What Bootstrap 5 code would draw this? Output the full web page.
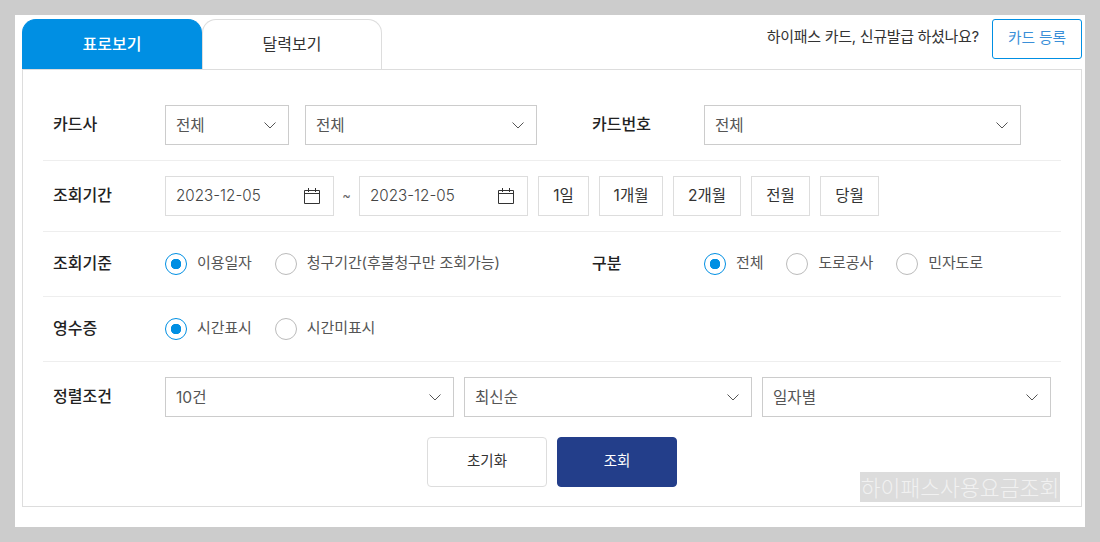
<!DOCTYPE html>
<html lang="ko">
<head>
<meta charset="utf-8">
<title>하이패스 사용요금 조회</title>
<link href="https://cdn.jsdelivr.net/npm/bootstrap@5.3.0/dist/css/bootstrap.min.css" rel="stylesheet">
<style>
html,body{height:100%}
body{background:#ccc;padding:15px 15px;font-family:Inter,"Noto Sans CJK KR",sans-serif;font-size:15px;color:#333;overflow:hidden}
.sheet{background:#fff;width:1070px;height:512px;padding:4px 3px 0 7px;position:relative}
.topbar{height:50px}
.tabset{border:0;width:360px;flex-wrap:nowrap}
.tabset .nav-link{width:180px;height:50px;display:flex;align-items:center;justify-content:center;border:1px solid #ddd;border-bottom:0;border-radius:14px 14px 0 0;color:#333;font-size:16px;background:#fff;margin:0;padding:0 0 2px}
.tabset .nav-link.active{background:#008fe3;border-color:#008fe3;color:#fff;font-weight:500}
.hint{font-size:15px;margin-right:13px;margin-top:-14px;letter-spacing:-.3px}
.btn.regbtn{width:90px;height:40px;border:1px solid #008fe3;border-radius:3px;color:#3a8fd8;background:#fff;font-size:14.7px;padding:0 0 2px;align-self:flex-start}
.panel{border:1px solid #ddd;width:1060px;height:438px;padding:20px 20px 0}
.frow{display:flex;align-items:center;padding:0 10px;border-bottom:1px solid #eee}
.frow.r1{height:71px;padding-top:15px;padding-bottom:15px}
.frow.r2{height:71px}
.frow.r3,.frow.r4{height:65px}
.frow.r5{height:55px;border-bottom:0;padding-top:15px}
.flabel{width:112px;font-weight:500;font-size:16px;color:#222;flex:none;padding-bottom:2px}
.flabel.second{width:112px;margin-left:55px}
.form-select.fsel{height:40px;border:1px solid #ccc;border-radius:0;font-size:15.6px;color:#555;padding:2px 30px 0 10px;font-family:inherit;background-image:url("data:image/svg+xml,%3Csvg xmlns='http://www.w3.org/2000/svg' width='12' height='7' viewBox='0 0 12 7'%3E%3Cpath d='M.5.5 6 6 11.5.5' fill='none' stroke='%23555' stroke-width='1'/%3E%3C/svg%3E");background-size:12px 7px;background-position:right 12px center;flex:none}
.w124{width:124px}.w232{width:232px}.w317{width:317px}.w289{width:289px}.w288{width:288px}
.datebox{width:169px;height:40px;border:1px solid #ddd;display:flex;align-items:center;justify-content:space-between;padding:0 12px 0 10px;color:#444;font-size:15.2px;flex:none;font-weight:300}
.tilde{width:25px;text-align:center;color:#666;font-size:13px;flex:none}
.btn.rangebtn{height:40px;border:1px solid #ddd;border-radius:0;background:#fff;color:#333;font-size:15.5px;padding:0;flex:none}
.w51{width:51px}.w64{width:64px}.w68{width:68px}.w59{width:59px}
.rgap{gap:10px;margin-left:10px}
.radioset{display:flex;align-items:center}
.form-check.rad{display:flex;align-items:center;padding:0;margin:0 23px 0 0;min-height:0}
.form-check.rad .form-check-input{width:22px;height:22px;margin:0 10px 0 0;float:none;border:1px solid #bbb;flex:none}
.form-check.rad .form-check-input:checked{background-color:#fff;border-color:#008fe3;background-image:radial-gradient(circle,#008fe3 0 5px,#fff 5.5px)}
.form-check.rad label{font-size:15px;color:#555;letter-spacing:-.1px;padding-bottom:2px}
.radgrp{width:427px;flex:none}
.actions{display:flex;justify-content:center;gap:10px;margin-top:20px}
.btn.act{width:120px;height:50px;font-size:14.5px;border-radius:4px;padding:0 0 2px;font-weight:400}
.btn.act.ghost{background:#fff;border:1px solid #ddd;color:#333}
.btn.act.prime{background:#233e8a;border:1px solid #233e8a;color:#fff}
.wmark{position:absolute;left:845px;top:457px;width:200px;height:30px;background:#dcdcdc;color:#f1f1f1;font-family:"Noto Sans CJK KR",sans-serif;font-size:21.6px;font-weight:300;line-height:30px;white-space:nowrap;text-align:center}
.cal{display:block}
</style>
</head>
<body>
<div class="sheet">
  <div class="topbar d-flex justify-content-between">
    <ul class="nav tabset">
      <li class="nav-item"><a class="nav-link active" href="#">표로보기</a></li>
      <li class="nav-item"><a class="nav-link" href="#">달력보기</a></li>
    </ul>
    <div class="d-flex align-items-center">
      <span class="hint">하이패스 카드, 신규발급 하셨나요?</span>
      <button type="button" class="btn regbtn">카드 등록</button>
    </div>
  </div>
  <div class="panel">
    <div class="frow r1">
      <div class="flabel">카드사</div>
      <select class="form-select fsel w124 me-3"><option>전체</option></select>
      <select class="form-select fsel w232"><option>전체</option></select>
      <div class="flabel second">카드번호</div>
      <select class="form-select fsel w317"><option>전체</option></select>
    </div>
    <div class="frow r2">
      <div class="flabel">조회기간</div>
      <div class="datebox">2023-12-05
        <svg class="cal" width="18" height="18" viewBox="0 0 18 18" fill="none" stroke="#333" stroke-width="1"><path d="M1.5 3.5h15v13h-15zM1.5 6.5h15M5.5 1v4M12.5 1v4"/></svg>
      </div>
      <div class="tilde">~</div>
      <div class="datebox">2023-12-05
        <svg class="cal" width="18" height="18" viewBox="0 0 18 18" fill="none" stroke="#333" stroke-width="1"><path d="M1.5 3.5h15v13h-15zM1.5 6.5h15M5.5 1v4M12.5 1v4"/></svg>
      </div>
      <div class="d-flex rgap">
        <button type="button" class="btn rangebtn w51">1일</button>
        <button type="button" class="btn rangebtn w64">1개월</button>
        <button type="button" class="btn rangebtn w68">2개월</button>
        <button type="button" class="btn rangebtn w59">전월</button>
        <button type="button" class="btn rangebtn w59">당월</button>
      </div>
    </div>
    <div class="frow r3">
      <div class="flabel">조회기준</div>
      <div class="radioset radgrp">
        <div class="form-check rad"><input class="form-check-input" type="radio" name="a" id="a1" checked><label for="a1">이용일자</label></div>
        <div class="form-check rad"><input class="form-check-input" type="radio" name="a" id="a2"><label for="a2">청구기간(후불청구만 조회가능)</label></div>
      </div>
      <div class="flabel">구분</div>
      <div class="radioset">
        <div class="form-check rad"><input class="form-check-input" type="radio" name="b" id="b1" checked><label for="b1">전체</label></div>
        <div class="form-check rad"><input class="form-check-input" type="radio" name="b" id="b2"><label for="b2">도로공사</label></div>
        <div class="form-check rad"><input class="form-check-input" type="radio" name="b" id="b3"><label for="b3">민자도로</label></div>
      </div>
    </div>
    <div class="frow r4">
      <div class="flabel">영수증</div>
      <div class="radioset">
        <div class="form-check rad"><input class="form-check-input" type="radio" name="c" id="c1" checked><label for="c1">시간표시</label></div>
        <div class="form-check rad"><input class="form-check-input" type="radio" name="c" id="c2"><label for="c2">시간미표시</label></div>
      </div>
    </div>
    <div class="frow r5">
      <div class="flabel">정렬조건</div>
      <div class="d-flex" style="gap:10px">
        <select class="form-select fsel w289"><option>10건</option></select>
        <select class="form-select fsel w288"><option>최신순</option></select>
        <select class="form-select fsel w289"><option>일자별</option></select>
      </div>
    </div>
    <div class="actions">
      <button type="button" class="btn act ghost">초기화</button>
      <button type="button" class="btn act prime">조회</button>
    </div>
  </div>
  <div class="wmark">하이패스사용요금조회</div>
</div>
<script src="https://cdn.jsdelivr.net/npm/bootstrap@5.3.0/dist/js/bootstrap.bundle.min.js"></script>
</body>
</html>
